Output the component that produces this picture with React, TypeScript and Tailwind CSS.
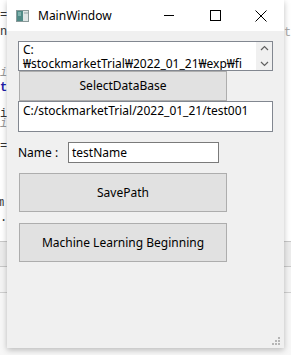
import React from 'react';

// Qt "MainWindow" dialog sitting over a code editor

const FONT = { fontFamily: '"Noto Sans", "Noto Sans CJK KR", sans-serif' };

const LEFT_LINES: { text: string; h: string; cls: string }[] = [
  { text: '', h: 'h-[9px]', cls: '' },
  { text: '=', h: 'h-[17px]', cls: 'text-[#333]' },
  { text: 'n', h: 'h-[16px]', cls: 'text-[#333]' },
  { text: '', h: 'h-[25px]', cls: '' },
  { text: 'ir', h: 'h-[15px]', cls: 'italic text-[#999]' },
  { text: 't', h: 'h-[17px]', cls: 'font-bold text-[#1c1ca8]' },
  { text: '', h: 'h-[9px]', cls: '' },
  { text: 'i', h: 'h-[10px]', cls: 'text-[#333]' },
  { text: 'ir', h: 'h-[22px]', cls: 'italic text-[#999]' },
  { text: '=', h: 'h-[57px]', cls: 'text-[#333]' },
  { text: 'm', h: 'h-[15px]', cls: 'text-[#333] -ml-[3px]' },
  { text: '.t', h: 'h-[13px]', cls: 'text-[#333]' },
];

function EditorStrip({ left }: { left: boolean }) {
  return (
    <div className="flex w-[7px] shrink-0 flex-col overflow-hidden">
      <div className="flex h-[241px] flex-col bg-white font-['Liberation_Mono',monospace] text-[12px] leading-none">
        {left ? (
          LEFT_LINES.map((line, i) => (
            <div key={i} className={`${line.h} whitespace-nowrap pl-[0px] ${line.cls}`}>
              {line.text}
            </div>
          ))
        ) : (
          <div className="mt-[27px] text-[#aaa]">tx</div>
        )}
      </div>
      <div className="h-px bg-[#c8c8c8]" />
      <div className="h-[24px] bg-[#ececec]" />
      <div className="h-px bg-[#c8c8c8]" />
      <div className="h-[25px] bg-[#f4f4f4]" />
      <div className="h-px bg-[#cfcfcf]" />
      <div className="flex-1 bg-[#f7f7f7]" />
    </div>
  );
}

function WindowIcon() {
  return (
    <svg width="13" height="12" viewBox="0 0 13 12" aria-hidden="true">
      <rect x="0.5" y="0.5" width="12" height="11" fill="#dfe6e6" stroke="#8a9a9a" />
      <rect x="1" y="1" width="6" height="10" fill="#4f8a86" />
      <rect x="2" y="2" width="3" height="4" fill="#7fb2ad" />
      <rect x="8" y="2" width="4" height="2" fill="#b9c6c6" />
    </svg>
  );
}

function TitleBar() {
  return (
    <div className="flex h-[31px] items-center bg-white">
      <div className="ml-[9px] mr-[9px] flex items-center">
        <WindowIcon />
      </div>
      <span className="text-[12px] text-[#000]">MainWindow</span>
      <div className="ml-auto flex h-full">
        <div className="flex w-[46px] items-center justify-center">
          <div className="h-px w-[10px] bg-black" />
        </div>
        <div className="flex w-[46px] items-center justify-center">
          <div className="h-[11px] w-[11px] border border-black" />
        </div>
        <div className="flex w-[46px] items-center justify-center">
          <svg width="12" height="12" viewBox="0 0 12 12" aria-hidden="true">
            <path d="M0.5 0.5 L11.5 11.5 M11.5 0.5 L0.5 11.5" stroke="#000" strokeWidth="1" />
          </svg>
        </div>
      </div>
    </div>
  );
}

function QtButton({ label, height }: { label: string; height: string }) {
  return (
    <div
      className={`ml-px flex w-[208px] items-center justify-center border border-[#adadad] bg-[#e1e1e1] text-[12px] text-black ${height}`}
    >
      {label}
    </div>
  );
}

export default function App() {
  return (
    <div className="flex h-[355px] w-[291px] overflow-hidden bg-[#f7f7f7]" style={FONT}>
      <EditorStrip left />

      {/* the window */}
      <div className="relative z-10 flex h-[348px] w-[277px] shrink-0 flex-col bg-[#f0f0f0] shadow-[0_2px_6px_rgba(0,0,0,0.25)]">
        <TitleBar />
        <div className="flex flex-1 flex-col px-[11px] pt-[10px]">
          <div className="flex h-[30px] w-[255px] border border-[#828790] bg-white">
            <div className="flex-1 overflow-hidden pl-[4px] pt-[1px] text-[12px] leading-[14px] text-black">
              <div>C:</div>
              <div className="whitespace-nowrap">₩stockmarketTrial₩2022_01_21₩exp₩fi</div>
            </div>
            <div className="flex w-[16px] flex-col items-center justify-between bg-[#f0f0f0] py-[3px]">
              <svg width="9" height="6" viewBox="0 0 9 6" aria-hidden="true">
                <path d="M1 5 L4.5 1.5 L8 5" fill="none" stroke="#606060" strokeWidth="1.2" />
              </svg>
              <svg width="9" height="6" viewBox="0 0 9 6" aria-hidden="true">
                <path d="M1 1 L4.5 4.5 L8 1" fill="none" stroke="#606060" strokeWidth="1.2" />
              </svg>
            </div>
          </div>
          <QtButton label="SelectDataBase" height="h-[30px]" />
          <div className="h-[31px] w-[255px] border border-[#828790] bg-white pl-[4px] pt-[2px] text-[12px] leading-[14px] text-black">
            C:/stockmarketTrial/2022_01_21/test001
          </div>
          <div className="mt-[10px] flex items-center">
            <span className="w-[50px] text-[12px] text-black">Name :</span>
            <div className="flex h-[21px] w-[151px] items-center border border-[#7a7a7a] bg-white pl-[3px] text-[12px] text-black">
              testName
            </div>
          </div>
          <div className="mt-[10px] flex flex-col gap-[11px]">
            <QtButton label="SavePath" height="h-[39px]" />
            <QtButton label="Machine Learning Beginning" height="h-[39px]" />
          </div>
          <div className="mt-auto flex justify-end pb-[3px] pr-[-7px]">
            <svg className="-mr-[7px]" width="8" height="8" viewBox="0 0 8 8" aria-hidden="true">
              <rect x="6" y="0" width="2" height="2" fill="#b5b5b5" />
              <rect x="3" y="3" width="2" height="2" fill="#b5b5b5" />
              <rect x="6" y="3" width="2" height="2" fill="#b5b5b5" />
              <rect x="0" y="6" width="2" height="2" fill="#b5b5b5" />
              <rect x="3" y="6" width="2" height="2" fill="#b5b5b5" />
              <rect x="6" y="6" width="2" height="2" fill="#b5b5b5" />
            </svg>
          </div>
        </div>
      </div>

      <EditorStrip left={false} />
    </div>
  );
}
